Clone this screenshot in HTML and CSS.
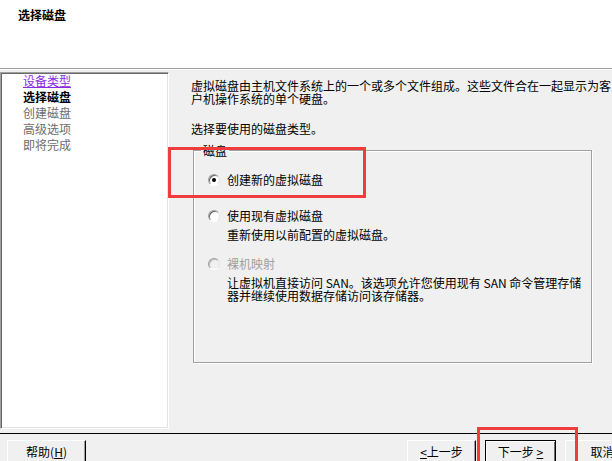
FILE: index.html
```html
<!DOCTYPE html>
<html lang="zh-CN">
<head>
    <meta charset="UTF-8">
    <title>新建虚拟机向导 - 选择磁盘</title>
    <link rel="stylesheet" href="styles.css">
</head>
<body>
    <div class="dialog">
        <div class="header">
            <h1 class="title">选择磁盘</h1>
        </div>

        <div class="main">
            <ul class="steps">
                <li class="step step-done"><a href="#">设备类型</a></li>
                <li class="step step-current">选择磁盘</li>
                <li class="step">创建磁盘</li>
                <li class="step">高级选项</li>
                <li class="step">即将完成</li>
            </ul>

            <div class="content">
                <p class="intro">虚拟磁盘由主机文件系统上的一个或多个文件组成。这些文件合在一起显示为客户机操作系统的单个硬盘。</p>
                <p class="prompt">选择要使用的磁盘类型。</p>

                <fieldset class="disk-group">
                    <legend>磁盘</legend>

                    <div class="option option-single">
                        <label class="option-label"><span class="radio checked"></span>创建新的虚拟磁盘</label>
                    </div>

                    <div class="option">
                        <label class="option-label"><span class="radio"></span>使用现有虚拟磁盘</label>
                        <div class="option-desc">重新使用以前配置的虚拟磁盘。</div>
                    </div>

                    <div class="option option-disabled">
                        <label class="option-label"><span class="radio"></span>裸机映射</label>
                        <div class="option-desc">让虚拟机直接访问 SAN。该选项允许您使用现有 SAN 命令管理存储<br>器并继续使用数据存储访问该存储器。</div>
                    </div>
                </fieldset>
            </div>
        </div>

        <div class="footer">
            <button class="btn btn-help">帮助(<u>H</u>)</button>
            <div class="nav-buttons">
                <button class="btn btn-prev"><u>&lt;</u>上一步</button>
                <button class="btn btn-next btn-default">下一步 <u>&gt;</u></button>
                <button class="btn btn-cancel">取消</button>
            </div>
        </div>

        <!-- 标注框 -->
        <div class="mark mark-option"></div>
        <div class="mark mark-next"></div>
    </div>
</body>
</html>
```

FILE: styles.css
```css
body {
    margin: 0;
    overflow: hidden;
    background-color: #f0f0f0;
    font-family: "Noto Sans CJK SC", "Liberation Sans", sans-serif;
    font-size: 12px;
    line-height: 13px;
    color: #000;
}

.dialog {
    position: relative;
    width: 650px;
    height: 461px;
}

/* 顶部标题区 */
.header {
    height: 68px;
    background-color: #fff;
    border-bottom: 1px solid #a0a0a0;
    box-shadow: 0 1px 0 #fff;
}

.title {
    margin: 0;
    padding: 8px 0 0 18px;
    font-size: 12px;
    font-weight: bold;
    line-height: 13px;
}

.main {
    display: flex;
    height: 357px;
    margin-top: 3px;
}

/* 左侧步骤列表 */
.steps {
    box-sizing: border-box;
    width: 169px;
    margin: 0;
    padding: 0 0 0 22px;
    list-style: none;
    background-color: #fff;
    border: 1px solid;
    border-color: #a0a0a0 #fff #fff #a0a0a0;
    box-shadow: inset 1px 1px 0 #696969, inset -1px -1px 0 #e3e3e3;
}

.step {
    line-height: 16px;
    color: #6d6d6d;
}

.step-done a {
    color: #8a2be2;
    text-decoration: underline;
}

.step-current {
    font-weight: bold;
    color: #000;
}

/* 右侧内容 */
.content {
    flex: 1;
    padding: 7px 0 0 22px;
}

.intro {
    width: 422px;
    margin: 0;
}

.prompt {
    margin: 17px 0 0;
}

.disk-group {
    box-sizing: border-box;
    width: 399px;
    height: 219px;
    margin: 9px 0 0 2px;
    padding: 16px 0 0;
    border: 1px solid #a0a0a0;
    box-shadow: 1px 1px 0 #fff, inset 1px 1px 0 #fff;
}

.disk-group legend {
    margin-left: 7px;
    padding: 0 2px;
    line-height: 13px;
    background-color: #f0f0f0;
}

.option {
    margin-bottom: 16px;
    padding-left: 14px;
}

.option-single {
    margin-bottom: 23px;
}

.option-label {
    display: flex;
    align-items: center;
    gap: 7px;
}

.option-desc {
    margin-top: 6px;
    padding-left: 19px;
    white-space: nowrap;
}

.option-disabled .option-label {
    color: #a0a0a0;
}

.radio {
    position: relative;
    box-sizing: border-box;
    width: 12px;
    height: 12px;
    border-radius: 50%;
    background-color: #fff;
    border: 1px solid;
    border-color: #a0a0a0 #e3e3e3 #fff #a0a0a0;
    box-shadow: inset 1px 1px 0 #696969;
}

.radio.checked::after {
    content: "";
    position: absolute;
    left: 3px;
    top: 3px;
    width: 4px;
    height: 4px;
    border-radius: 50%;
    background-color: #000;
}

.option-disabled .radio {
    background-color: #f0f0f0;
    box-shadow: inset 1px 1px 0 #c0c0c0;
}

/* 底部按钮 */
.footer {
    display: flex;
    margin-top: 4px;
    padding: 6px 10px 0 7px;
    border-top: 1px solid #000;
}

.nav-buttons {
    display: flex;
    gap: 9px;
    margin-left: auto;
}

.btn {
    box-sizing: border-box;
    height: 23px;
    padding: 0;
    font-family: inherit;
    font-size: 12px;
    line-height: 13px;
    color: #000;
    background-color: #f0f0f0;
    border: 1px solid;
    border-color: #fff #000 #000 #fff;
    box-shadow: inset -1px -1px 0 #a0a0a0;
}

.btn u {
    text-underline-offset: 1px;
}

.btn-help {
    width: 79px;
}

.btn-prev {
    width: 69px;
}

.btn-next {
    width: 71px;
}

.btn-cancel {
    width: 75px;
}

.btn-default {
    border-color: #000;
    box-shadow: inset 1px 1px 0 #fff, inset -1px -1px 0 #696969;
}

/* 红色标注 */
.mark {
    position: absolute;
    box-sizing: border-box;
    border: 3px solid #ef3d3d;
}

.mark-option {
    left: 168px;
    top: 147px;
    width: 198px;
    height: 51px;
}

.mark-next {
    left: 477px;
    top: 427px;
    width: 101px;
    height: 45px;
}
```
